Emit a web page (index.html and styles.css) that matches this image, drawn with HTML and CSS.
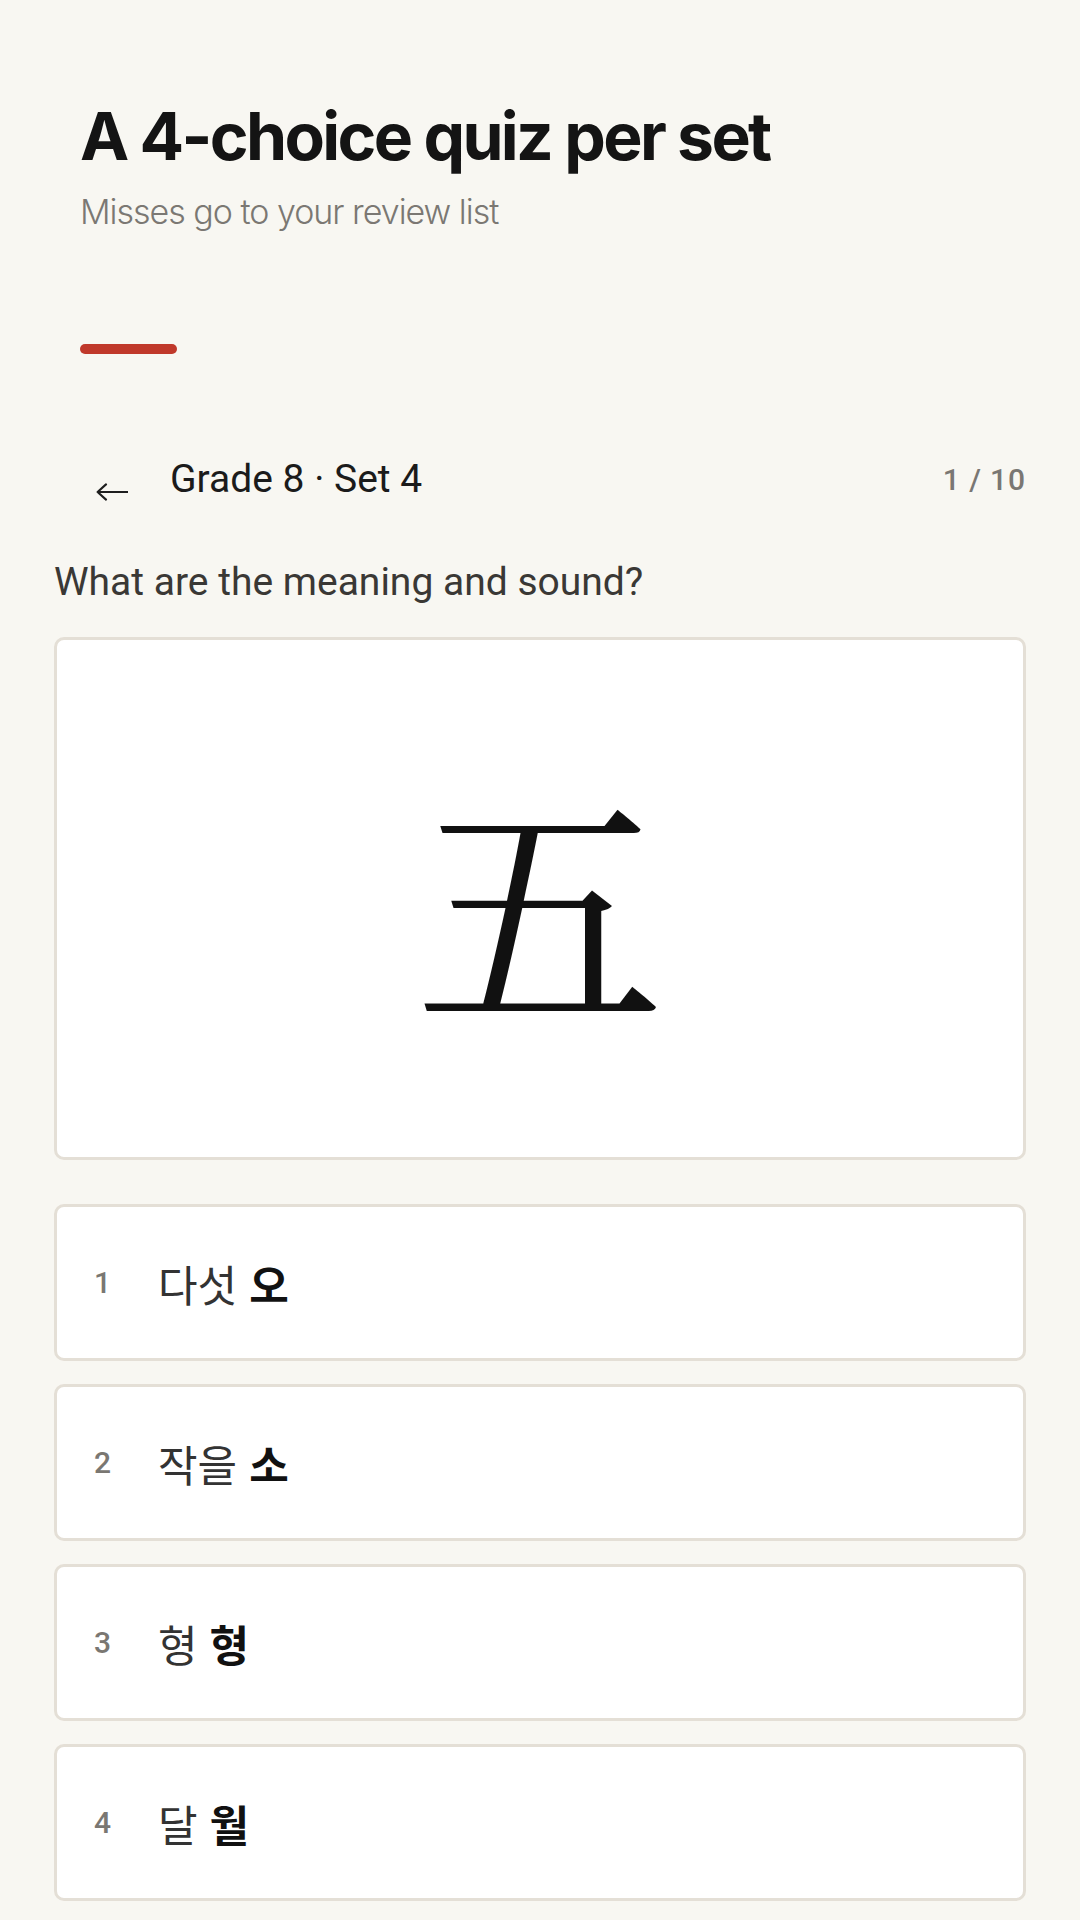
FILE: index.html
```html
<!DOCTYPE html>
<html lang="en">
<head>
<meta charset="utf-8">
<title>A 4-choice quiz per set</title>
<link rel="stylesheet" href="styles.css">
</head>
<body>
<header class="hero">
  <h1 class="hero-title">A 4-choice quiz per set</h1>
  <p class="hero-sub">Misses go to your review list</p>
  <div class="hero-rule"></div>
</header>
<main class="quiz">
  <div class="quiz-nav">
    <span class="back" aria-label="Back">
      <svg class="back-icon" viewBox="0 0 32 18" width="32" height="18"><path d="M1.6 9H31.5M10 1.4L1.6 9L10 16.6" fill="none" stroke="#1e1e1e" stroke-width="2.1" stroke-linecap="round" stroke-linejoin="round"/></svg>
    </span>
    <span class="set-name">Grade 8 · Set 4</span>
    <span class="progress">1 / 10</span>
  </div>
  <p class="prompt">What are the meaning and sound?</p>
  <div class="card"><span class="hanja" lang="ko">五</span></div>
  <ol class="choices">
    <li class="choice"><span class="num">1</span><span class="answer" lang="ko">다섯 <b>오</b></span></li>
    <li class="choice"><span class="num">2</span><span class="answer" lang="ko">작을 <b>소</b></span></li>
    <li class="choice"><span class="num">3</span><span class="answer" lang="ko">형 <b>형</b></span></li>
    <li class="choice"><span class="num">4</span><span class="answer" lang="ko">달 <b>월</b></span></li>
  </ol>
</main>
</body>
</html>
```
FILE: styles.css
```css
html, body {
  margin: 0;
  padding: 0;
}
body {
  background: #f8f7f2;
  font-family: Roboto, "Noto Sans CJK KR", sans-serif;
  color: #1b1b1b;
}
.hero {
  padding: 97px 80px 0;
}
.hero-title {
  margin: 0;
  font-family: Inter, "Noto Sans", sans-serif;
  font-weight: 700;
  font-size: 66px;
  line-height: 1.2;
  letter-spacing: -0.04em;
  color: #141414;
}
.hero-sub {
  margin: 15px 0 0;
  font-family: Inter, "Noto Sans", sans-serif;
  font-weight: 300;
  font-size: 34px;
  line-height: 1.26;
  letter-spacing: -0.03em;
  color: #7b7873;
}
.hero-rule {
  margin-top: 110px;
  width: 97px;
  height: 10px;
  border-radius: 5px;
  background: #c0392b;
}
.quiz {
  padding: 101px 54px 0;
}
.quiz-nav {
  display: flex;
  align-items: center;
  padding-left: 42px;
}
.back {
  display: flex;
  margin: 24px 42px 0 0;
}
.back-icon {
  display: block;
}
.set-name {
  flex: 1;
  font-family: Roboto, sans-serif;
  font-size: 39px;
  line-height: 1.27;
  color: #1b1b1b;
}
.progress {
  font-family: Roboto, sans-serif;
  font-weight: 500;
  font-size: 30px;
  line-height: 1.3;
  letter-spacing: 0.03em;
  color: #7a7773;
}
.prompt {
  margin: 53px 0 0;
  font-family: Roboto, sans-serif;
  font-size: 39px;
  line-height: 1.27;
  color: #3a3835;
}
.card {
  margin-top: 30px;
  height: 523px;
  box-sizing: border-box;
  background: #fff;
  border: 3px solid #e4dfd6;
  border-radius: 10px;
  display: flex;
  align-items: center;
  justify-content: center;
}
.hanja {
  font-family: "Noto Serif CJK KR", "Noto Serif CJK JP", "Noto Serif KR", "Noto Sans CJK KR", serif;
  font-size: 250px;
  line-height: 1;
  color: #111;
}
.choices {
  list-style: none;
  margin: 44px 0 0;
  padding: 0;
  display: flex;
  flex-direction: column;
  gap: 23px;
}
.choice {
  height: 157px;
  box-sizing: border-box;
  background: #fff;
  border: 3px solid #e4dfd6;
  border-radius: 10px;
  display: flex;
  align-items: center;
  padding-left: 37px;
}
.num {
  width: 64px;
  font-family: Roboto, sans-serif;
  font-weight: 500;
  font-size: 30px;
  color: #7a7772;
}
.answer {
  font-family: "Noto Sans CJK KR", sans-serif;
  font-weight: 400;
  font-size: 43px;
  color: #333;
}
.answer b {
  font-weight: 700;
  color: #111;
}
```
